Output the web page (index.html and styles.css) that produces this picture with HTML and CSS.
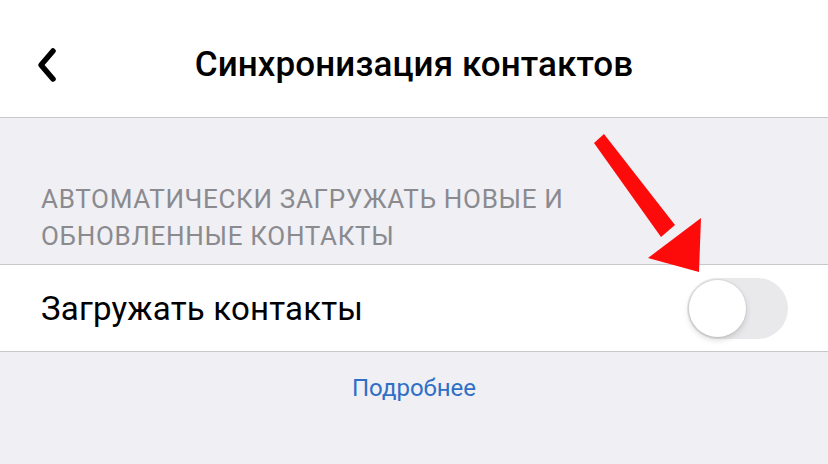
FILE: index.html
```html
<!DOCTYPE html>
<html lang="ru">
<head>
<meta charset="utf-8">
<link rel="stylesheet" href="styles.css">
</head>
<body>
<header class="nav">
  <div class="nav-left">
    <svg class="back" width="26" height="36" viewBox="0 0 26 36"><path d="M19 4 L7 18 L19 32" fill="none" stroke="#000" stroke-width="5.5" stroke-linecap="round" stroke-linejoin="round"/></svg>
  </div>
  <h1 class="title">Синхронизация контактов</h1>
  <div class="nav-right"></div>
</header>
<main class="content">
  <div class="section-header">АВТОМАТИЧЕСКИ ЗАГРУЖАТЬ НОВЫЕ И<br>ОБНОВЛЕННЫЕ КОНТАКТЫ</div>
  <div class="row">
    <span class="row-label">Загружать контакты</span>
    <span class="switch"><span class="knob"></span></span>
  </div>
  <div class="footer"><a class="link">Подробнее</a></div>
  <svg class="arrow" width="140" height="150" viewBox="0 0 140 150">
    <polygon points="-1,10 9,1 80,92 66,104" fill="#fd0b0b"/>
    <polygon points="53,125 106,85 104,139" fill="#fd0b0b"/>
  </svg>
</main>
</body>
</html>
```
FILE: styles.css
```css
* { box-sizing: border-box; }
html, body { margin: 0; padding: 0; }
body {
  width: 828px;
  height: 464px;
  overflow: hidden;
  background: #efeff4;
  font-family: Roboto, "Noto Sans", sans-serif;
  color: #000;
}
.nav {
  height: 118px;
  padding-top: 12px;
  background: #fff;
  border-bottom: 1px solid #c8c7cc;
  display: grid;
  grid-template-columns: 1fr auto 1fr;
  align-items: center;
}
.nav-left { display: flex; align-items: center; padding-left: 34px; }
.title {
  margin: 0;
  font-size: 35px;
  font-weight: 500;
  letter-spacing: 0.1px;
}
.content { position: relative; }
.section-header {
  padding: 63px 41px 9px;
  font-size: 26px;
  line-height: 37px;
  letter-spacing: 0.7px;
  color: #8a8a8f;
}
.row {
  height: 88px;
  background: #fff;
  border-top: 1px solid #c8c7cc;
  border-bottom: 1px solid #c8c7cc;
  display: flex;
  align-items: center;
  justify-content: space-between;
  padding: 0 40px 0 41px;
}
.row-label { font-size: 33px; letter-spacing: 0.2px; }
.switch {
  width: 101px;
  height: 61px;
  border-radius: 31px;
  background: #e9e9eb;
  display: flex;
  align-items: center;
  padding-left: 2px;
}
.knob {
  width: 57px;
  height: 57px;
  border-radius: 50%;
  background: #fff;
  box-shadow: 0 3px 6px rgba(0,0,0,0.15), 0 0 0 1px rgba(0,0,0,0.05);
}
.footer {
  text-align: center;
  padding-top: 18px;
}
.link {
  font-size: 24px;
  line-height: 36px;
  color: #2f6fc6;
}
.arrow {
  position: absolute;
  left: 595px;
  top: 15px;
  overflow: visible;
}
```
